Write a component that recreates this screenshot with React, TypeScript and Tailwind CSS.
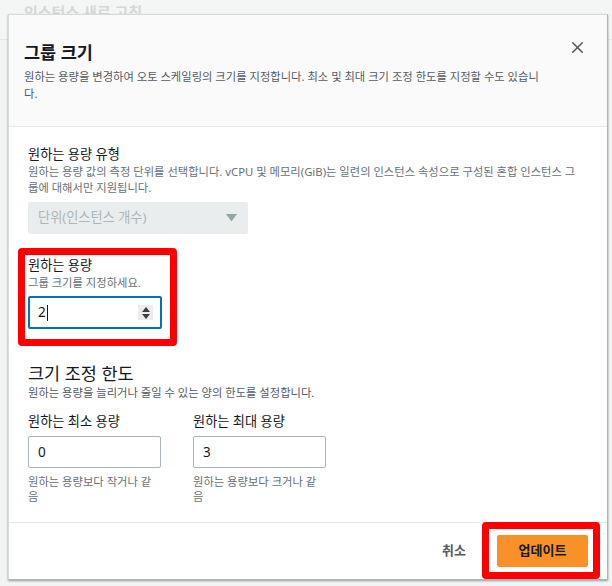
import { X } from 'lucide-react';

function Field({ label, children }: { label: string; children: React.ReactNode }) {
  return (
    <div className="flex flex-col">
      <div className="text-[13.2px] leading-[20px] text-[#16191f]">{label}</div>
      {children}
    </div>
  );
}

export default function App() {
  return (
    <div className="relative h-[586px] w-[612px] overflow-hidden bg-[#f2f3f3] font-['Noto_Sans','Noto_Sans_CJK_KR',sans-serif]">
      {/* page behind the modal */}
      <div className="absolute inset-0">
        <div className="h-[40px] border-b border-[#e3e6e6] bg-[#f4f5f5] pl-[24px] pt-[1px] text-[15px] font-bold leading-[22px] text-[#d3d8d8]">
          인스턴스 새로 고침
        </div>
      </div>

      <div className="relative ml-[8px] mt-[14px] flex h-[566px] w-[600px] flex-col border border-[#d5dbdb] border-b-[#aab7b8] border-r-[#aab7b8] bg-white shadow-[0_1px_2px_rgba(0,28,36,0.4)]">
        {/* header */}
        <div className="relative h-[112px] border-b border-[#e6e9e9] bg-[#fafafa] px-[15px] pt-[26px]">
          <h2 className="text-[17.5px] font-bold leading-[22px] text-[#16191f]">그룹 크기</h2>
          <p className="mt-[5px] whitespace-nowrap text-[11.3px] leading-[17px] text-[#545b64]">
            원하는 용량을 변경하여 오토 스케일링의 크기를 지정합니다. 최소 및 최대 크기 조정 한도를 지정할 수도 있습니
            <br />
            다.
          </p>
          <button className="absolute right-[20px] top-[23px] text-[#545b64]">
            <X size={19} strokeWidth={2} />
          </button>
        </div>

        {/* body */}
        <div className="flex-1 px-[19px] pt-[17px]">
          <Field label="원하는 용량 유형">
            <p className="whitespace-nowrap text-[11.3px] leading-[16px] text-[#687078]">
              원하는 용량 값의 측정 단위를 선택합니다. vCPU 및 메모리(GiB)는 일련의 인스턴스 속성으로 구성된 혼합 인스턴스 그
              <br />
              룹에 대해서만 지원됩니다.
            </p>
            <div className="mt-[6px] flex h-[32px] w-[220px] items-center justify-between rounded-[2px] bg-[#eaeded] pl-[10px] pr-[11px]">
              <span className="text-[13.2px] text-[#aab7b8]">단위(인스턴스 개수)</span>
              <svg width="11" height="8" viewBox="0 0 11 8">
                <path d="M0 0h11L5.5 7.5z" fill="#95a5a6" />
              </svg>
            </div>
          </Field>

          <div className="relative mt-[21px] w-[142px]">
            <Field label="원하는 용량">
              <p className="text-[11.3px] leading-[16px] text-[#687078]">그룹 크기를 지정하세요.</p>
              <div className="mt-[5px] flex h-[33px] w-[134px] items-center justify-between rounded-[2px] border-2 border-[#0073bb] pl-[8px] pr-[7px]">
                <span className="flex items-center text-[13.5px] text-[#16191f]">
                  2<span className="ml-[1px] inline-block h-[16px] w-px bg-[#16191f]" />
                </span>
                <span className="flex h-[15px] w-[15px] flex-col items-center justify-center gap-[2px] bg-[#ececec]">
                  <svg width="8" height="5" viewBox="0 0 8 5">
                    <path d="M4 0L8 5H0z" fill="#3a3f44" />
                  </svg>
                  <svg width="8" height="5" viewBox="0 0 8 5">
                    <path d="M0 0h8L4 5z" fill="#3a3f44" />
                  </svg>
                </span>
              </div>
            </Field>
            <div className="pointer-events-none absolute left-[-10px] top-[-7px] h-[98px] w-[159px] rounded-[4px] border-[7px] border-[#ff0000]" />
          </div>

          <div className="mt-[32px]">
            <h3 className="text-[17.5px] leading-[24px] text-[#16191f]">크기 조정 한도</h3>
            <p className="text-[11.3px] leading-[16px] text-[#545b64]">원하는 용량을 늘리거나 줄일 수 있는 양의 한도를 설정합니다.</p>
            <div className="mt-[10px] flex gap-[32px]">
              {[
                { label: '원하는 최소 용량', value: '0', hint: '원하는 용량보다 작거나 같' },
                { label: '원하는 최대 용량', value: '3', hint: '원하는 용량보다 크거나 같' },
              ].map((f) => (
                <div key={f.label} className="w-[133px]">
                  <Field label={f.label}>
                    <div className="mt-[5px] flex h-[32px] w-[133px] items-center rounded-[2px] border border-[#aab7b8] pl-[9px] text-[13.5px] text-[#16191f]">
                      {f.value}
                    </div>
                    <p className="mt-[6px] text-[11.3px] leading-[15px] text-[#687078]">
                      {f.hint}
                      <br />음
                    </p>
                  </Field>
                </div>
              ))}
            </div>
          </div>
        </div>

        {/* footer */}
        <div className="flex h-[57px] items-center justify-end gap-[31px] border-t border-[#e6e9e9] pr-[19px]">
          <button className="text-[13px] font-bold text-[#545b64]">취소</button>
          <span className="relative">
            <button className="h-[32px] w-[91px] rounded-[2px] bg-[#fa9028] text-[13px] font-bold text-[#16191f]">업데이트</button>
            <span className="pointer-events-none absolute left-[-15px] top-[-13px] h-[57px] w-[118px] rounded-[4px] border-[7px] border-[#ff0000]" />
          </span>
        </div>
      </div>
    </div>
  );
}
